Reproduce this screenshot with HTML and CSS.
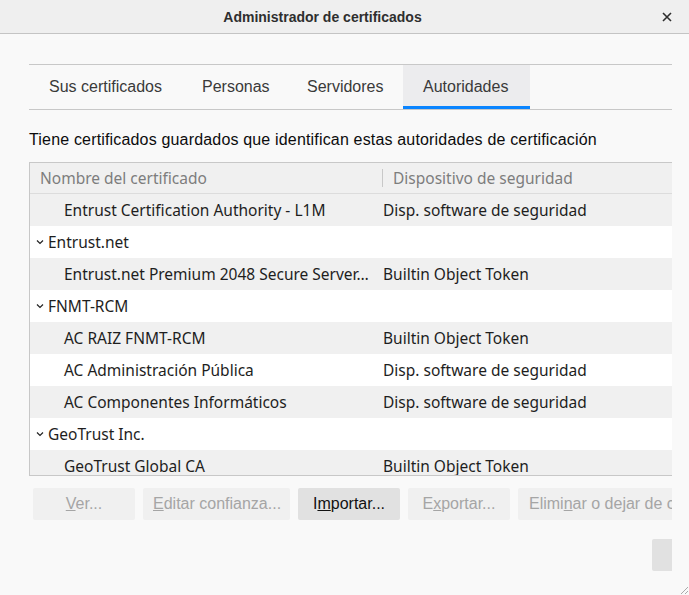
FILE: index.html
```html
<!DOCTYPE html>
<html lang="es">
<head>
<meta charset="utf-8">
<title>Administrador de certificados</title>
<link rel="stylesheet" href="styles.css">
</head>
<body>
<div class="window">
  <header class="titlebar">
    <span class="title">Administrador de certificados</span>
    <span class="close">
      <svg width="12" height="12" viewBox="0 0 12 12"><path d="M2 2 L10 10 M10 2 L2 10" stroke="#2e2e2e" stroke-width="1.6" fill="none"/></svg>
    </span>
  </header>
  <main class="content">
    <nav class="tabs">
      <div class="tab">Sus certificados</div>
      <div class="tab">Personas</div>
      <div class="tab">Servidores</div>
      <div class="tab active">Autoridades</div>
    </nav>
    <p class="desc">Tiene certificados guardados que identifican estas autoridades de certificación</p>
    <div class="tree">
      <div class="thead">
        <div class="col1">Nombre del certificado</div>
        <div class="col2"><span class="sep"></span>Dispositivo de seguridad</div>
      </div>
      <div class="tbody">
        <div class="row odd child"><div class="col1">Entrust Certification Authority - L1M</div><div class="col2">Disp. software de seguridad</div></div>
        <div class="row group"><div class="col1"><span class="twisty"><svg width="8" height="6" viewBox="0 0 8 6"><path d="M1 1.5 L4 4.5 L7 1.5" stroke="#222" stroke-width="1.2" fill="none"/></svg></span>Entrust.net</div><div class="col2"></div></div>
        <div class="row odd child"><div class="col1">Entrust.net Premium 2048 Secure Server…</div><div class="col2">Builtin Object Token</div></div>
        <div class="row group"><div class="col1"><span class="twisty"><svg width="8" height="6" viewBox="0 0 8 6"><path d="M1 1.5 L4 4.5 L7 1.5" stroke="#222" stroke-width="1.2" fill="none"/></svg></span>FNMT-RCM</div><div class="col2"></div></div>
        <div class="row odd child"><div class="col1">AC RAIZ FNMT-RCM</div><div class="col2">Builtin Object Token</div></div>
        <div class="row child"><div class="col1">AC Administración Pública</div><div class="col2">Disp. software de seguridad</div></div>
        <div class="row odd child"><div class="col1">AC Componentes Informáticos</div><div class="col2">Disp. software de seguridad</div></div>
        <div class="row group"><div class="col1"><span class="twisty"><svg width="8" height="6" viewBox="0 0 8 6"><path d="M1 1.5 L4 4.5 L7 1.5" stroke="#222" stroke-width="1.2" fill="none"/></svg></span>GeoTrust Inc.</div><div class="col2"></div></div>
        <div class="row odd child"><div class="col1">GeoTrust Global CA</div><div class="col2">Builtin Object Token</div></div>
      </div>
    </div>
    <div class="buttons">
      <button class="btn w-ver" disabled><u>V</u>er...</button>
      <button class="btn w-edit" disabled><u>E</u>ditar confianza...</button>
      <button class="btn w-imp enabled">I<u>m</u>portar...</button>
      <button class="btn w-exp" disabled>E<u>x</u>portar...</button>
      <button class="btn w-del" disabled>Elimi<u>n</u>ar o dejar de c</button>
    </div>
    <div class="footer">
      <button class="btn ok enabled" aria-label="Aceptar"></button>
    </div>
  </main>
  <span class="grip">
    <svg width="8" height="8" viewBox="0 0 8 8"><path d="M8 1 L1 8 M8 5 L5 8" stroke="#aaa" stroke-width="1" fill="none"/></svg>
  </span>
</div>
</body>
</html>
```
FILE: styles.css
```css
* { box-sizing: border-box; }
html, body { margin: 0; padding: 0; }
body {
  width: 689px;
  height: 595px;
  overflow: hidden;
  background: #f9f9f9;
  font-family: "Liberation Sans", Arial, sans-serif;
  color: #0c0c0d;
}
.window {
  position: relative;
  width: 689px;
  height: 595px;
  display: flex;
  flex-direction: column;
}
.titlebar {
  height: 34px;
  flex: none;
  background: #efefef;
  border-bottom: 1px solid #c4c4c4;
  display: flex;
  align-items: center;
  justify-content: center;
  position: relative;
}
.title {
  font-size: 14px;
  font-weight: bold;
  color: #2e2e2e;
  margin-left: -44px;
}
.close {
  position: absolute;
  right: 16px;
  top: 11px;
  width: 12px;
  height: 12px;
  display: flex;
}
.content {
  flex: 1;
  width: 672px;
  padding-left: 29px;
  padding-top: 30px;
  overflow: hidden;
}
.tabs {
  display: flex;
  height: 46px;
  border-top: 1px solid #c8c8c8;
  border-bottom: 1px solid #c8c8c8;
  width: 643px;
}
.tab {
  height: 44px;
  padding: 0 20px;
  display: flex;
  align-items: center;
  font-size: 16px;
  color: #3a3a3a;
  border-bottom: 3px solid transparent;
  padding-top: 3px;
}
.tab:nth-child(1) { width: 153px; }
.tab:nth-child(2) { width: 105px; }
.tab:nth-child(3) { width: 116px; }
.tab.active {
  width: 127px;
  background: #ececee;
  border-bottom-color: #0a84ff;
}
.desc {
  margin: 20px 0 12px;
  font-size: 16px;
  letter-spacing: 0.17px;
  line-height: 20px;
  color: #0c0c0d;
  white-space: nowrap;
}
.tree {
  width: 660px;
  height: 314px;
  border: 1px solid #c8c8c8;
  border-right: none;
  background: #fff;
  overflow: hidden;
  font-family: "Noto Sans", sans-serif;
  font-size: 15.5px;
}
.thead {
  display: flex;
  height: 31px;
  background: #f0f0f0;
  border-bottom: 1px solid #dcdcdc;
  color: #7d7d7d;
  align-items: center;
  width: 643px;
}
.thead .col1 { padding-left: 10px; }
.thead .col2 { display: flex; align-items: center; padding-left: 0; }
.sep {
  display: inline-block;
  width: 1px;
  height: 18px;
  background: #c8c8c8;
  margin-right: 10px;
}
.col1 { width: 352px; flex: none; white-space: nowrap; overflow: hidden; }
.col2 { flex: 1; white-space: nowrap; }
.tbody { width: 643px; }
.row {
  display: flex;
  height: 32px;
  align-items: center;
  color: #1e1e1e;
  background: #fff;
}
.row.odd { background: #f0f0f0; }
.row.child .col1 { padding-left: 34px; }
.row.group .col1 { padding-left: 6px; display: flex; align-items: center; }
.twisty { width: 12px; display: inline-flex; align-items: center; }
.row .col2 { padding-left: 1px; }
.buttons {
  display: flex;
  gap: 8px;
  margin-top: 12px;
  padding-left: 4px;
  width: 700px;
}
.btn {
  height: 32px;
  border: none;
  border-radius: 2px;
  background: #f0f0f0;
  color: #a5a5a5;
  font-family: "Liberation Sans", Arial, sans-serif;
  font-size: 16px;
  padding: 0 10px;
  flex: none;
  white-space: nowrap;
}
.btn.enabled { background: #e1e1e1; color: #111; }
.w-ver { width: 102px; }
.w-edit { width: 147px; }
.w-imp { width: 102px; }
.w-exp { width: 102px; }
.w-del { width: 160px; text-align: left; padding-left: 11px; overflow: hidden; }
.footer {
  display: flex;
  justify-content: flex-start;
  padding-left: 623px;
  margin-top: 19px;
}
.ok { width: 100px; background: #e8e8e8; color: #111; }
.grip {
  position: absolute;
  right: 1px;
  bottom: 1px;
  width: 8px;
  height: 8px;
  display: flex;
}
```
